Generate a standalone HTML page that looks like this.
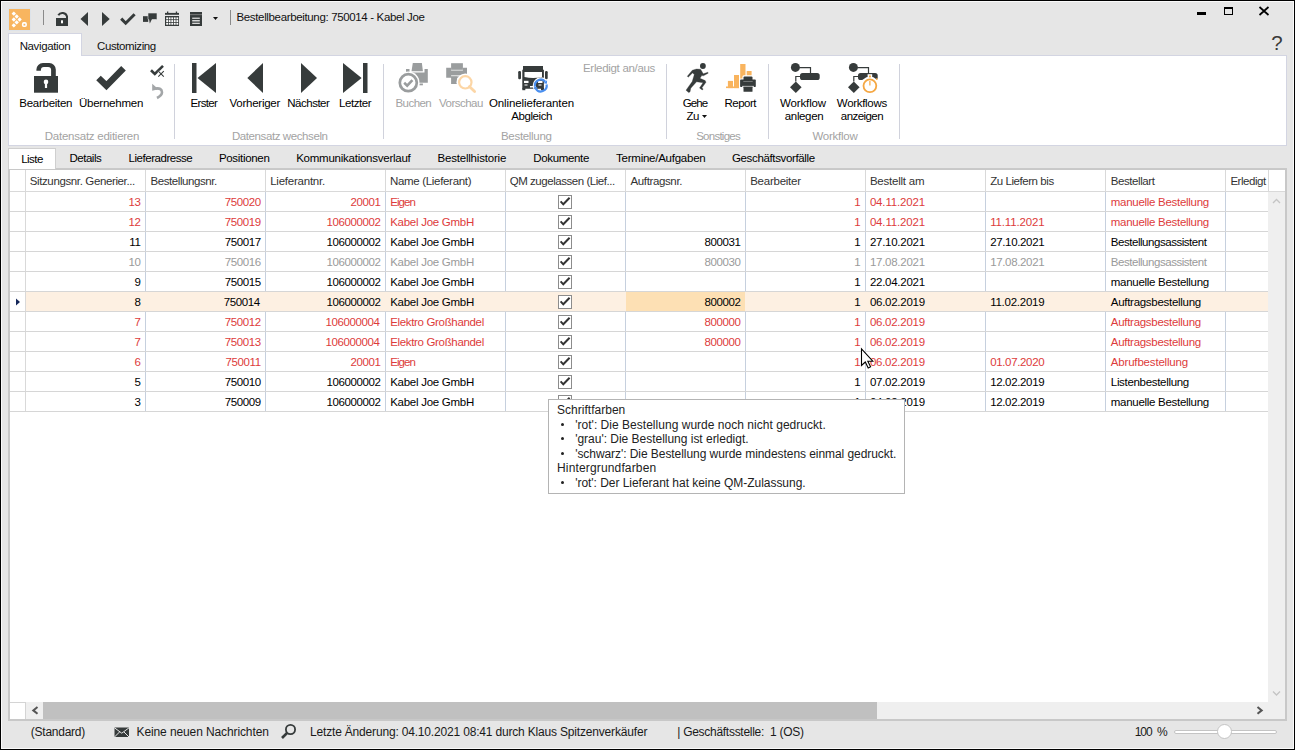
<!DOCTYPE html><html><head><meta charset="utf-8"><style>
html,body{margin:0;padding:0}
body{width:1295px;height:750px;overflow:hidden;position:relative;background:#e6e6e6;font-family:"Liberation Sans", sans-serif}
.t{position:absolute;white-space:nowrap}
.r{position:absolute}
.s{position:absolute;overflow:visible}
</style></head><body>
<div class="r" style="left:0px;top:0px;width:1295px;height:1px;background:#000;"></div>
<div class="r" style="left:0px;top:749px;width:1295px;height:1px;background:#000;"></div>
<div class="r" style="left:0px;top:0px;width:1px;height:750px;background:#000;"></div>
<div class="r" style="left:1294px;top:0px;width:1px;height:750px;background:#000;"></div>
<div class="r" style="left:1px;top:1px;width:1293px;height:1px;background:#fafafa;"></div>
<div class="r" style="left:1px;top:748px;width:1293px;height:1px;background:#fafafa;"></div>
<div class="r" style="left:1px;top:1px;width:1px;height:748px;background:#fafafa;"></div>
<div class="r" style="left:1293px;top:1px;width:1px;height:748px;background:#fafafa;"></div>
<svg class="s" style="left:8px;top:8px" width="23" height="23" viewBox="0 0 23 23"><rect x="0.5" y="0.5" width="22" height="22" fill="none" stroke="#dde3ea" stroke-width="1"/><rect x="1" y="1" width="21" height="21" fill="#f8b55f"/><rect x="4.25" y="4.05" width="3.1" height="3.1" rx="0.4" fill="#fff" transform="rotate(45 5.8 5.6)"/><rect x="7.1499999999999995" y="6.95" width="3.1" height="3.1" rx="0.4" fill="#fff" transform="rotate(45 8.7 8.5)"/><rect x="4.25" y="9.95" width="3.1" height="3.1" rx="0.4" fill="#fff" transform="rotate(45 5.8 11.5)"/><rect x="10.1" y="9.95" width="3.1" height="3.1" rx="0.4" fill="#fff" transform="rotate(45 11.65 11.5)"/><rect x="7.1499999999999995" y="12.85" width="3.1" height="3.1" rx="0.4" fill="#fff" transform="rotate(45 8.7 14.4)"/><rect x="4.25" y="15.849999999999998" width="3.1" height="3.1" rx="0.4" fill="#fff" transform="rotate(45 5.8 17.4)"/><rect x="14.7" y="14.9" width="3.4" height="3.4" rx="1" fill="none" stroke="#fff" stroke-width="1.6"/></svg>
<div class="r" style="left:43px;top:10px;width:1px;height:15px;background:#8a8a8a;"></div>
<svg class="s" style="left:55px;top:10px" width="15" height="18" viewBox="0 0 15 18"><rect x="1" y="8" width="12" height="8" fill="#363b3b"/><path d="M3.3 5.2 A4.7 4.5 0 0 1 12 6.5 V8" fill="none" stroke="#363b3b" stroke-width="2"/><rect x="6" y="10.3" width="2" height="3" fill="#fff"/></svg>
<svg class="s" style="left:80px;top:11px" width="9" height="16" viewBox="0 0 9 16"><path d="M8 1 V15 L0.5 8 Z" fill="#363b3b"/></svg>
<svg class="s" style="left:101px;top:11px" width="10" height="16" viewBox="0 0 10 16"><path d="M1 1 V15 L8.7 8 Z" fill="#363b3b"/></svg>
<svg class="s" style="left:119px;top:11px" width="17" height="14" viewBox="0 0 17 14"><path d="M2.2 7.6 L6.7 12.2 L15.6 3.2" fill="none" stroke="#363b3b" stroke-width="3"/></svg>
<svg class="s" style="left:142px;top:12px" width="17" height="13" viewBox="0 0 17 13"><rect x="1" y="4.2" width="5.2" height="5.7" fill="#363b3b"/><rect x="6" y="1" width="9" height="6.5" rx="0.5" fill="#363b3b" stroke="#e6e6e6" stroke-width="0.6"/><path d="M7 7 L7.8 11.5 L10 7 Z" fill="#363b3b"/></svg>
<svg class="s" style="left:165px;top:11px" width="14" height="16" viewBox="0 0 14 16"><rect x="0" y="1.9" width="14" height="1.9" fill="#363b3b"/><rect x="2" y="0.5" width="1.3" height="2" fill="#363b3b"/><rect x="10.8" y="0.5" width="1.3" height="2" fill="#363b3b"/><rect x="0" y="5" width="14" height="10" fill="#363b3b"/><rect x="1.2" y="6.4" width="1.8" height="1.9" fill="#fff"/><rect x="3.75" y="6.4" width="1.8" height="1.9" fill="#fff"/><rect x="6.3" y="6.4" width="1.8" height="1.9" fill="#fff"/><rect x="8.85" y="6.4" width="1.8" height="1.9" fill="#fff"/><rect x="11.399999999999999" y="6.4" width="1.8" height="1.9" fill="#fff"/><rect x="1.2" y="9.100000000000001" width="1.8" height="1.9" fill="#fff"/><rect x="3.75" y="9.100000000000001" width="1.8" height="1.9" fill="#fff"/><rect x="6.3" y="9.100000000000001" width="1.8" height="1.9" fill="#fff"/><rect x="8.85" y="9.100000000000001" width="1.8" height="1.9" fill="#fff"/><rect x="11.399999999999999" y="9.100000000000001" width="1.8" height="1.9" fill="#fff"/><rect x="1.2" y="11.8" width="1.8" height="1.9" fill="#fff"/><rect x="3.75" y="11.8" width="1.8" height="1.9" fill="#fff"/><rect x="6.3" y="11.8" width="1.8" height="1.9" fill="#fff"/><rect x="8.85" y="11.8" width="1.8" height="1.9" fill="#fff"/><rect x="11.399999999999999" y="11.8" width="1.8" height="1.9" fill="#fff"/></svg>
<svg class="s" style="left:190px;top:12px" width="12" height="15" viewBox="0 0 12 15"><rect x="0" y="0" width="12" height="14" fill="#363b3b"/><rect x="0" y="2.3" width="12" height="0.8" fill="#888"/><rect x="2.2" y="5.6" width="7.6" height="1.3" fill="#d8d8d8"/><rect x="2.2" y="8.2" width="7.6" height="1.2" fill="#fff"/><rect x="2.2" y="10.7" width="7.6" height="1.3" fill="#d8d8d8"/></svg>
<svg class="s" style="left:212px;top:16px" width="7" height="5" viewBox="0 0 7 5"><path d="M1 1 H6 L3.5 4 Z" fill="#111"/></svg>
<div class="r" style="left:230px;top:10px;width:1px;height:15px;background:#8a8a8a;"></div>
<div class="t" style="left:236.50px;top:10px;font-size:11.5px;line-height:14px;color:#111;letter-spacing:-0.351px;">Bestellbearbeitung: 750014 - Kabel Joe</div>
<div class="r" style="left:1197px;top:12px;width:9px;height:3px;background:#000;"></div>
<div class="r" style="left:1224px;top:7px;width:7px;height:5px;border:1.6px solid #000;border-top-width:2px"></div>
<svg class="s" style="left:1258px;top:6px" width="12" height="10" viewBox="0 0 12 10"><path d="M1.5 1 L10.5 9 M10.5 1 L1.5 9" stroke="#000" stroke-width="1.7"/></svg>
<div class="t" style="left:1271.30px;top:34px;font-size:20.5px;line-height:18px;color:#3a3a3a;letter-spacing:0.000px;">?</div>
<div class="r" style="left:8px;top:33px;width:72px;height:24px;background:#fff;border:1px solid #d3d5e2;border-bottom:none"></div>
<div class="r" style="left:8px;top:55px;width:1277px;height:89px;background:#fff;border:1px solid #d3d5e2"></div>
<div class="r" style="left:9px;top:55px;width:72px;height:1px;background:#fff;"></div>
<div class="t" style="left:19.70px;top:39px;font-size:11.5px;line-height:14px;color:#111;letter-spacing:-0.383px;">Navigation</div>
<div class="t" style="left:97.10px;top:39px;font-size:11.5px;line-height:14px;color:#111;letter-spacing:-0.418px;">Customizing</div>
<div class="r" style="left:174px;top:64px;width:1px;height:75px;background:#d0d2dc;"></div>
<div class="r" style="left:383px;top:64px;width:1px;height:75px;background:#d0d2dc;"></div>
<div class="r" style="left:666px;top:64px;width:1px;height:75px;background:#d0d2dc;"></div>
<div class="r" style="left:768px;top:64px;width:1px;height:75px;background:#d0d2dc;"></div>
<div class="r" style="left:899px;top:64px;width:1px;height:75px;background:#d0d2dc;"></div>
<svg class="s" style="left:34px;top:63px" width="24" height="30" viewBox="0 0 24 30"><rect x="0" y="13" width="24" height="16.7" fill="#363b3b"/><path d="M2.4 7.7 V6.5 A6.5 6.5 0 0 1 8.9 0 H15.3 A6.5 6.5 0 0 1 21.8 6.5 V13.1 H17.1 V7 A3 3 0 0 0 14.1 4 H9.9 A3 3 0 0 0 6.9 7 V7.7 Z" fill="#363b3b"/><circle cx="12" cy="18.9" r="2.3" fill="#fff"/><rect x="10.9" y="19" width="2.2" height="6" fill="#fff"/></svg>
<svg class="s" style="left:95px;top:64px" width="32" height="27" viewBox="0 0 32 27"><path d="M3.5 14 L11.4 21.7 L28.5 4.3" fill="none" stroke="#363b3b" stroke-width="6.5"/></svg>
<svg class="s" style="left:148px;top:63px" width="18" height="16" viewBox="0 0 18 16"><path d="M3 7.3 L6.8 11 L15 2.8" fill="none" stroke="#363b3b" stroke-width="2.6"/><path d="M10.3 8.2 L15.8 13.6 M15.8 8.2 L10.3 13.6" stroke="#fff" stroke-width="2.2"/><path d="M10.3 8.2 L15.8 13.6 M15.8 8.2 L10.3 13.6" stroke="#363b3b" stroke-width="1.1"/></svg>
<svg class="s" style="left:150px;top:83px" width="15" height="17" viewBox="0 0 15 17"><path d="M5.5 5.6 Q11.8 4.6 12 9.2 Q12 12.3 7 15" fill="none" stroke="#a3a6a8" stroke-width="2.6"/><path d="M2.2 0.8 V7.8 L8.4 6.2 Z" fill="#a3a6a8"/></svg>
<div class="t" style="left:19.30px;top:96px;font-size:11.5px;line-height:14px;color:#000;letter-spacing:-0.270px;">Bearbeiten</div>
<div class="t" style="left:79.00px;top:96px;font-size:11.5px;line-height:14px;color:#000;letter-spacing:-0.243px;">Übernehmen</div>
<div class="t" style="left:44.80px;top:129px;font-size:11.5px;line-height:14px;color:#a3a3a3;letter-spacing:-0.249px;">Datensatz editieren</div>
<svg class="s" style="left:191px;top:62px" width="27" height="32" viewBox="0 0 27 32"><rect x="1" y="1" width="4.5" height="30" fill="#363b3b"/><path d="M25 1 V31 L6.5 16 Z" fill="#363b3b"/></svg>
<svg class="s" style="left:246px;top:62px" width="18" height="32" viewBox="0 0 18 32"><path d="M17 1 V31 L1.3 16 Z" fill="#363b3b"/></svg>
<svg class="s" style="left:300px;top:62px" width="18" height="32" viewBox="0 0 18 32"><path d="M1 1 V31 L17 16 Z" fill="#363b3b"/></svg>
<svg class="s" style="left:342px;top:62px" width="27" height="32" viewBox="0 0 27 32"><rect x="21" y="1" width="4.5" height="30" fill="#363b3b"/><path d="M1 1 V31 L19.6 16 Z" fill="#363b3b"/></svg>
<div class="t" style="left:190.50px;top:96px;font-size:11.5px;line-height:14px;color:#000;letter-spacing:-0.668px;">Erster</div>
<div class="t" style="left:229.50px;top:96px;font-size:11.5px;line-height:14px;color:#000;letter-spacing:-0.248px;">Vorheriger</div>
<div class="t" style="left:287.30px;top:96px;font-size:11.5px;line-height:14px;color:#000;letter-spacing:-0.498px;">Nächster</div>
<div class="t" style="left:339.00px;top:96px;font-size:11.5px;line-height:14px;color:#000;letter-spacing:-0.421px;">Letzter</div>
<div class="t" style="left:231.90px;top:129px;font-size:11.5px;line-height:14px;color:#a3a3a3;letter-spacing:-0.401px;">Datensatz wechseln</div>
<svg class="s" style="left:396px;top:62px" width="34" height="32" viewBox="0 0 34 32"><path d="M16.8 1 H25.9 L26.9 9.3 H15.5 Z" fill="#9a9d9e"/><path d="M10 7 H13.5 V10.5 H28.5 V7.1 H31.8 V20.7 H10 Z" fill="#9a9d9e"/><rect x="23.4" y="21.5" width="3.5" height="1.8" fill="#9a9d9e"/><circle cx="12.3" cy="20.7" r="11.2" fill="#fff"/><circle cx="12.3" cy="20.7" r="8.5" fill="none" stroke="#9a9d9e" stroke-width="2.7"/><path d="M8.2 20.8 L11.2 23.6 L16.4 18.2" fill="none" stroke="#9a9d9e" stroke-width="2.6"/></svg>
<svg class="s" style="left:445px;top:62px" width="33" height="32" viewBox="0 0 33 32"><rect x="6.1" y="1.2" width="11.8" height="6.6" fill="#9a9d9e"/><path d="M1.2 5.7 H6.1 V8.5 H17.9 V5.7 H22 V15.8 H1.2 Z" fill="#9a9d9e"/><rect x="6.1" y="13.4" width="11.8" height="1" fill="#fff"/><rect x="6.1" y="14.4" width="6.2" height="7.6" fill="#9a9d9e"/><circle cx="20.3" cy="20.3" r="8.8" fill="#fff"/><circle cx="20.3" cy="20.3" r="6.2" fill="none" stroke="#fcd6a6" stroke-width="2.2"/><path d="M24.4 24.6 L29.6 29.6" stroke="#fcd6a6" stroke-width="2.8" stroke-linecap="round"/></svg>
<svg class="s" style="left:518px;top:66px" width="31" height="27" viewBox="0 0 31 27"><rect x="5" y="0" width="20" height="5.3" fill="#363b3b"/><path d="M4.3 3.8 H25.9 V22.8 H4.3 Z M6.5 6 V11 Q15 13 24 11 V6 Z" fill="#363b3b" fill-rule="evenodd"/><rect x="0.2" y="5" width="2.8" height="8.2" rx="1.2" fill="#363b3b"/><rect x="27" y="5" width="2.7" height="8.2" rx="1.2" fill="#363b3b"/><rect x="4.3" y="22" width="3" height="2.2" fill="#363b3b"/><rect x="23" y="22" width="3" height="2.2" fill="#363b3b"/><rect x="6" y="14.8" width="4.5" height="2.2" fill="#fff"/><rect x="20" y="14.8" width="4.5" height="2.2" fill="#fff"/><rect x="6.5" y="18.5" width="3" height="1" fill="#fff"/><rect x="20.5" y="18.5" width="3" height="1" fill="#fff"/><rect x="12" y="20" width="6" height="1.5" fill="#fff"/><circle cx="22.8" cy="19.4" r="7.2" fill="none" stroke="#fff" stroke-width="1.8"/><path d="M16.99 20.52 A5.9 5.9 0 0 1 27.32 15.71" fill="none" stroke="#4a8fef" stroke-width="2.2"/><path d="M28.93 17.63 L29.08 14.23 L25.56 17.19 Z" fill="#4a8fef"/><path d="M28.61 18.48 A5.9 5.9 0 0 1 17.69 22.45" fill="none" stroke="#4a8fef" stroke-width="2.2"/><path d="M16.44 20.28 L15.70 23.60 L19.68 21.30 Z" fill="#4a8fef"/></svg>
<div class="t" style="left:395.50px;top:96px;font-size:11.5px;line-height:14px;color:#a3a3a3;letter-spacing:-0.562px;">Buchen</div>
<div class="t" style="left:439.00px;top:96px;font-size:11.5px;line-height:14px;color:#a3a3a3;letter-spacing:-0.508px;">Vorschau</div>
<div class="t" style="left:489.00px;top:96px;font-size:11.5px;line-height:14px;color:#000;letter-spacing:-0.116px;">Onlinelieferanten</div>
<div class="t" style="left:511.30px;top:109px;font-size:11.5px;line-height:14px;color:#000;letter-spacing:-0.431px;">Abgleich</div>
<div class="t" style="left:501.00px;top:129px;font-size:11.5px;line-height:14px;color:#a3a3a3;letter-spacing:-0.312px;">Bestellung</div>
<div class="t" style="left:583.00px;top:61px;font-size:11.5px;line-height:14px;color:#a3a3a3;letter-spacing:-0.312px;">Erledigt an/aus</div>
<svg class="s" style="left:685px;top:63px" width="25" height="31" viewBox="0 0 25 31"><circle cx="17.9" cy="3.0" r="2.9" fill="#363b3b"/><path d="M2.3 13.2 L7.3 7.2 L11.5 6.0 L15.5 6.2 L16.8 8.2 L18.2 10.8 L22.9 9.2 L23.2 10.2 L18.5 12.8 L16.8 12.6 L15.0 15.3 L20.2 17.6 L21.0 19.2 L17.0 24.8 L18.2 26.2 L17.2 26.9 L14.5 25.0 L18.0 19.8 L11.6 18.8 L5.8 25.2 L5.0 29.0 L3.6 29.6 L1.0 27.2 L7.2 18.5 L9.3 11.5 L7.5 10.0 L3.2 14.2 Z" fill="#363b3b" stroke="#363b3b" stroke-width="0.3" stroke-linejoin="round"/></svg>
<svg class="s" style="left:726px;top:64px" width="30" height="29" viewBox="0 0 30 29"><rect x="1.9" y="16.9" width="5.1" height="7.2" fill="#f9b45e"/><rect x="8" y="11" width="5" height="13.1" fill="#f9b45e"/><rect x="14.2" y="0" width="5.3" height="15" fill="#f9b45e"/><rect x="20.7" y="7" width="4.9" height="6" fill="#f9b45e"/><rect x="0" y="22.5" width="13" height="1.6" fill="#f9b45e"/><rect x="16.4" y="11.3" width="11.2" height="8" rx="1.5" fill="#fff"/><rect x="13.1" y="14.6" width="17.7" height="14.4" rx="1.5" fill="#fff"/><rect x="17.5" y="12.4" width="9" height="5.6" rx="1" fill="#363b3b"/><rect x="14.1" y="15.6" width="15.7" height="7.4" rx="0.8" fill="#363b3b"/><rect x="17.3" y="17.1" width="9.4" height="0.9" fill="#7a7d7d"/><rect x="16" y="21.9" width="12" height="0.8" fill="#fff"/><rect x="17.5" y="22.7" width="9" height="5.1" rx="0.6" fill="#363b3b"/></svg>
<div class="t" style="left:682.80px;top:96px;font-size:11.5px;line-height:14px;color:#000;letter-spacing:-0.912px;">Gehe</div>
<div class="t" style="left:686.50px;top:109px;font-size:11.5px;line-height:14px;color:#000;letter-spacing:-0.400px;">Zu</div>
<svg class="s" style="left:702px;top:115px" width="6" height="4" viewBox="0 0 6 4"><path d="M0 0 H5 L2.5 3 Z" fill="#111"/></svg>
<div class="t" style="left:724.50px;top:96px;font-size:11.5px;line-height:14px;color:#000;letter-spacing:-0.524px;">Report</div>
<div class="t" style="left:696.20px;top:129px;font-size:11.5px;line-height:14px;color:#a3a3a3;letter-spacing:-0.744px;">Sonstiges</div>
<svg class="s" style="left:790px;top:63px" width="31" height="31" viewBox="0 0 31 31"><circle cx="5.4" cy="4.4" r="4.5" fill="#363b3b"/><path d="M9.5 4.65 H20.5 V10" fill="none" stroke="#363b3b" stroke-width="1.2"/><rect x="10" y="10" width="19.7" height="7" rx="2.6" fill="#363b3b"/><path d="M10.2 13.5 H5.8 V18.5" fill="none" stroke="#363b3b" stroke-width="1.2"/><path d="M5.8 18.4 L11.6 24.2 L5.8 30 L0 24.2 Z" fill="#363b3b"/></svg>
<svg class="s" style="left:848px;top:63px" width="32" height="32" viewBox="0 0 32 32"><circle cx="5.4" cy="4.4" r="4.5" fill="#363b3b"/><path d="M9.5 4.65 H20.5 V10" fill="none" stroke="#363b3b" stroke-width="1.2"/><rect x="10" y="10" width="19.7" height="7" rx="2.6" fill="#363b3b"/><path d="M10.2 13.5 H5.8 V18.5" fill="none" stroke="#363b3b" stroke-width="1.2"/><path d="M5.8 18.4 L11.6 24.2 L5.8 30 L0 24.2 Z" fill="#363b3b"/><circle cx="21.9" cy="22.8" r="9.2" fill="#fff"/><rect x="20.6" y="12.2" width="2.6" height="2.4" fill="#fff" stroke="#fff" stroke-width="2"/><circle cx="21.9" cy="22.8" r="6.4" fill="none" stroke="#f5a742" stroke-width="1.8"/><rect x="21" y="12.5" width="1.9" height="1.9" fill="#f5a742"/><rect x="21.3" y="18" width="1.2" height="4.5" fill="#f5a742"/><rect x="28" y="15.3" width="1.5" height="1.5" fill="#f5a742"/></svg>
<div class="t" style="left:780.00px;top:96px;font-size:11.5px;line-height:14px;color:#000;letter-spacing:-0.138px;">Workflow</div>
<div class="t" style="left:784.80px;top:109px;font-size:11.5px;line-height:14px;color:#000;letter-spacing:-0.356px;">anlegen</div>
<div class="t" style="left:836.80px;top:96px;font-size:11.5px;line-height:14px;color:#000;letter-spacing:-0.309px;">Workflows</div>
<div class="t" style="left:840.80px;top:109px;font-size:11.5px;line-height:14px;color:#000;letter-spacing:-0.555px;">anzeigen</div>
<div class="t" style="left:812.40px;top:129px;font-size:11.5px;line-height:14px;color:#a3a3a3;letter-spacing:-0.253px;">Workflow</div>
<div class="r" style="left:8px;top:168px;width:1279px;height:1px;background:#c9c9c9;"></div>
<div class="r" style="left:8px;top:148px;width:46px;height:21px;background:#fff;border:1px solid #cfcfcf;border-bottom:none"></div>
<div class="t" style="left:21.30px;top:152px;font-size:11.5px;line-height:14px;color:#000;letter-spacing:-0.574px;">Liste</div>
<div class="t" style="left:69.50px;top:151px;font-size:11.5px;line-height:14px;color:#000;letter-spacing:-0.484px;">Details</div>
<div class="t" style="left:128.60px;top:151px;font-size:11.5px;line-height:14px;color:#000;letter-spacing:-0.465px;">Lieferadresse</div>
<div class="t" style="left:218.90px;top:151px;font-size:11.5px;line-height:14px;color:#000;letter-spacing:-0.312px;">Positionen</div>
<div class="t" style="left:296.20px;top:151px;font-size:11.5px;line-height:14px;color:#000;letter-spacing:-0.247px;">Kommunikationsverlauf</div>
<div class="t" style="left:437.50px;top:151px;font-size:11.5px;line-height:14px;color:#000;letter-spacing:-0.199px;">Bestellhistorie</div>
<div class="t" style="left:533.20px;top:151px;font-size:11.5px;line-height:14px;color:#000;letter-spacing:-0.327px;">Dokumente</div>
<div class="t" style="left:616.10px;top:151px;font-size:11.5px;line-height:14px;color:#000;letter-spacing:-0.249px;">Termine/Aufgaben</div>
<div class="t" style="left:732.00px;top:151px;font-size:11.5px;line-height:14px;color:#000;letter-spacing:-0.359px;">Geschäftsvorfälle</div>

<div class="r" style="left:8px;top:169px;width:1279px;height:552px;background:#c8c8c8;"></div>
<div class="r" style="left:10px;top:170px;width:1275px;height:549px;background:#fff;"></div>
<div class="r" style="left:1268px;top:192px;width:17px;height:527px;background:#efefef;"></div>
<div class="r" style="left:10px;top:191px;width:1258px;height:1px;background:#d9d9d9;"></div>
<div class="r" style="left:25px;top:170px;width:1px;height:21px;background:#d9d9d9;"></div>
<div class="r" style="left:145px;top:170px;width:1px;height:21px;background:#d9d9d9;"></div>
<div class="r" style="left:265px;top:170px;width:1px;height:21px;background:#d9d9d9;"></div>
<div class="r" style="left:385px;top:170px;width:1px;height:21px;background:#d9d9d9;"></div>
<div class="r" style="left:505px;top:170px;width:1px;height:21px;background:#d9d9d9;"></div>
<div class="r" style="left:625px;top:170px;width:1px;height:21px;background:#d9d9d9;"></div>
<div class="r" style="left:745px;top:170px;width:1px;height:21px;background:#d9d9d9;"></div>
<div class="r" style="left:865px;top:170px;width:1px;height:21px;background:#d9d9d9;"></div>
<div class="r" style="left:985px;top:170px;width:1px;height:21px;background:#d9d9d9;"></div>
<div class="r" style="left:1105px;top:170px;width:1px;height:21px;background:#d9d9d9;"></div>
<div class="r" style="left:1225px;top:170px;width:1px;height:21px;background:#d9d9d9;"></div>
<div class="r" style="left:1268px;top:170px;width:1px;height:22px;background:#d9d9d9;"></div>
<div class="r" style="left:1268px;top:191px;width:17px;height:1px;background:#d9d9d9;"></div>
<div class="t" style="left:29.70px;top:174px;font-size:11.5px;line-height:14px;color:#333;letter-spacing:-0.372px;">Sitzungsnr. Generier...</div>
<div class="t" style="left:150.60px;top:174px;font-size:11.5px;line-height:14px;color:#333;letter-spacing:-0.442px;">Bestellungsnr.</div>
<div class="t" style="left:270.20px;top:174px;font-size:11.5px;line-height:14px;color:#333;letter-spacing:-0.231px;">Lieferantnr.</div>
<div class="t" style="left:389.90px;top:174px;font-size:11.5px;line-height:14px;color:#333;letter-spacing:-0.310px;">Name (Lieferant)</div>
<div class="t" style="left:509.70px;top:174px;font-size:11.5px;line-height:14px;color:#333;letter-spacing:-0.455px;">QM zugelassen (Lief...</div>
<div class="t" style="left:630.50px;top:174px;font-size:11.5px;line-height:14px;color:#333;letter-spacing:-0.372px;">Auftragsnr.</div>
<div class="t" style="left:750.20px;top:174px;font-size:11.5px;line-height:14px;color:#333;letter-spacing:-0.248px;">Bearbeiter</div>
<div class="t" style="left:869.90px;top:174px;font-size:11.5px;line-height:14px;color:#333;letter-spacing:-0.220px;">Bestellt am</div>
<div class="t" style="left:990.20px;top:174px;font-size:11.5px;line-height:14px;color:#333;letter-spacing:-0.440px;">Zu Liefern bis</div>
<div class="t" style="left:1110.80px;top:174px;font-size:11.5px;line-height:14px;color:#333;letter-spacing:-0.427px;">Bestellart</div>
<div class="t" style="left:1230.40px;top:174px;font-size:11.5px;line-height:14px;color:#333;letter-spacing:-0.457px;">Erledigt</div>
<div class="r" style="left:10px;top:211px;width:1258px;height:1px;background:#d6d6d6;"></div>
<div class="r" style="left:25px;top:192px;width:1px;height:19px;background:#d9d9d9;"></div>
<div class="r" style="left:145px;top:192px;width:1px;height:19px;background:#c6d0de;"></div>
<div class="r" style="left:265px;top:192px;width:1px;height:19px;background:#c6d0de;"></div>
<div class="r" style="left:385px;top:192px;width:1px;height:19px;background:#c6d0de;"></div>
<div class="r" style="left:505px;top:192px;width:1px;height:19px;background:#c6d0de;"></div>
<div class="r" style="left:625px;top:192px;width:1px;height:19px;background:#c6d0de;"></div>
<div class="r" style="left:745px;top:192px;width:1px;height:19px;background:#c6d0de;"></div>
<div class="r" style="left:865px;top:192px;width:1px;height:19px;background:#c6d0de;"></div>
<div class="r" style="left:985px;top:192px;width:1px;height:19px;background:#c6d0de;"></div>
<div class="r" style="left:1105px;top:192px;width:1px;height:19px;background:#c6d0de;"></div>
<div class="r" style="left:1225px;top:192px;width:1px;height:19px;background:#c6d0de;"></div>
<div class="t" style="left:128.49px;top:195px;font-size:11.5px;line-height:14px;color:#dd3b3b;letter-spacing:-0.390px;">13</div>
<div class="t" style="left:224.67px;top:195px;font-size:11.5px;line-height:14px;color:#dd3b3b;letter-spacing:-0.390px;">750020</div>
<div class="t" style="left:350.48px;top:195px;font-size:11.5px;line-height:14px;color:#dd3b3b;letter-spacing:-0.390px;">20001</div>
<div class="t" style="left:390.20px;top:195px;font-size:11.5px;line-height:14px;color:#dd3b3b;letter-spacing:-0.954px;">Eigen</div>
<div class="r" style="left:558px;top:195px;width:12px;height:12px;border:1px solid #8c8c8c;background:#fff"></div>
<svg class="s" style="left:558px;top:195px" width="14" height="14" viewBox="0 0 14 14"><path d="M2.6 6.3 L5.3 9.3 L11.6 2.8" fill="none" stroke="#333" stroke-width="2"/></svg>
<div class="t" style="left:854.30px;top:195px;font-size:11.5px;line-height:14px;color:#dd3b3b;letter-spacing:0.000px;">1</div>
<div class="t" style="left:869.90px;top:195px;font-size:11.5px;line-height:14px;color:#dd3b3b;letter-spacing:-0.167px;">04.11.2021</div>
<div class="t" style="left:1110.80px;top:195px;font-size:11.5px;line-height:14px;color:#dd3b3b;letter-spacing:-0.287px;">manuelle Bestellung</div>
<div class="r" style="left:10px;top:231px;width:1258px;height:1px;background:#d6d6d6;"></div>
<div class="r" style="left:25px;top:212px;width:1px;height:19px;background:#d9d9d9;"></div>
<div class="r" style="left:145px;top:212px;width:1px;height:19px;background:#c6d0de;"></div>
<div class="r" style="left:265px;top:212px;width:1px;height:19px;background:#c6d0de;"></div>
<div class="r" style="left:385px;top:212px;width:1px;height:19px;background:#c6d0de;"></div>
<div class="r" style="left:505px;top:212px;width:1px;height:19px;background:#c6d0de;"></div>
<div class="r" style="left:625px;top:212px;width:1px;height:19px;background:#c6d0de;"></div>
<div class="r" style="left:745px;top:212px;width:1px;height:19px;background:#c6d0de;"></div>
<div class="r" style="left:865px;top:212px;width:1px;height:19px;background:#c6d0de;"></div>
<div class="r" style="left:985px;top:212px;width:1px;height:19px;background:#c6d0de;"></div>
<div class="r" style="left:1105px;top:212px;width:1px;height:19px;background:#c6d0de;"></div>
<div class="r" style="left:1225px;top:212px;width:1px;height:19px;background:#c6d0de;"></div>
<div class="t" style="left:128.49px;top:215px;font-size:11.5px;line-height:14px;color:#dd3b3b;letter-spacing:-0.390px;">12</div>
<div class="t" style="left:224.67px;top:215px;font-size:11.5px;line-height:14px;color:#dd3b3b;letter-spacing:-0.390px;">750019</div>
<div class="t" style="left:326.45px;top:215px;font-size:11.5px;line-height:14px;color:#dd3b3b;letter-spacing:-0.390px;">106000002</div>
<div class="t" style="left:390.20px;top:215px;font-size:11.5px;line-height:14px;color:#dd3b3b;letter-spacing:-0.267px;">Kabel Joe GmbH</div>
<div class="r" style="left:558px;top:215px;width:12px;height:12px;border:1px solid #8c8c8c;background:#fff"></div>
<svg class="s" style="left:558px;top:215px" width="14" height="14" viewBox="0 0 14 14"><path d="M2.6 6.3 L5.3 9.3 L11.6 2.8" fill="none" stroke="#333" stroke-width="2"/></svg>
<div class="t" style="left:854.30px;top:215px;font-size:11.5px;line-height:14px;color:#dd3b3b;letter-spacing:0.000px;">1</div>
<div class="t" style="left:869.90px;top:215px;font-size:11.5px;line-height:14px;color:#dd3b3b;letter-spacing:-0.167px;">04.11.2021</div>
<div class="t" style="left:990.20px;top:215px;font-size:11.5px;line-height:14px;color:#dd3b3b;letter-spacing:-0.161px;">11.11.2021</div>
<div class="t" style="left:1110.80px;top:215px;font-size:11.5px;line-height:14px;color:#dd3b3b;letter-spacing:-0.287px;">manuelle Bestellung</div>
<div class="r" style="left:10px;top:251px;width:1258px;height:1px;background:#d6d6d6;"></div>
<div class="r" style="left:25px;top:232px;width:1px;height:19px;background:#d9d9d9;"></div>
<div class="r" style="left:145px;top:232px;width:1px;height:19px;background:#c6d0de;"></div>
<div class="r" style="left:265px;top:232px;width:1px;height:19px;background:#c6d0de;"></div>
<div class="r" style="left:385px;top:232px;width:1px;height:19px;background:#c6d0de;"></div>
<div class="r" style="left:505px;top:232px;width:1px;height:19px;background:#c6d0de;"></div>
<div class="r" style="left:625px;top:232px;width:1px;height:19px;background:#c6d0de;"></div>
<div class="r" style="left:745px;top:232px;width:1px;height:19px;background:#c6d0de;"></div>
<div class="r" style="left:865px;top:232px;width:1px;height:19px;background:#c6d0de;"></div>
<div class="r" style="left:985px;top:232px;width:1px;height:19px;background:#c6d0de;"></div>
<div class="r" style="left:1105px;top:232px;width:1px;height:19px;background:#c6d0de;"></div>
<div class="r" style="left:1225px;top:232px;width:1px;height:19px;background:#c6d0de;"></div>
<div class="t" style="left:129.35px;top:235px;font-size:11.5px;line-height:14px;color:#000;letter-spacing:-0.390px;">11</div>
<div class="t" style="left:224.67px;top:235px;font-size:11.5px;line-height:14px;color:#000;letter-spacing:-0.390px;">750017</div>
<div class="t" style="left:326.45px;top:235px;font-size:11.5px;line-height:14px;color:#000;letter-spacing:-0.390px;">106000002</div>
<div class="t" style="left:390.20px;top:235px;font-size:11.5px;line-height:14px;color:#000;letter-spacing:-0.267px;">Kabel Joe GmbH</div>
<div class="r" style="left:558px;top:235px;width:12px;height:12px;border:1px solid #8c8c8c;background:#fff"></div>
<svg class="s" style="left:558px;top:235px" width="14" height="14" viewBox="0 0 14 14"><path d="M2.6 6.3 L5.3 9.3 L11.6 2.8" fill="none" stroke="#333" stroke-width="2"/></svg>
<div class="t" style="left:704.47px;top:235px;font-size:11.5px;line-height:14px;color:#000;letter-spacing:-0.390px;">800031</div>
<div class="t" style="left:854.30px;top:235px;font-size:11.5px;line-height:14px;color:#000;letter-spacing:0.000px;">1</div>
<div class="t" style="left:869.90px;top:235px;font-size:11.5px;line-height:14px;color:#000;letter-spacing:-0.262px;">27.10.2021</div>
<div class="t" style="left:990.20px;top:235px;font-size:11.5px;line-height:14px;color:#000;letter-spacing:-0.351px;">27.10.2021</div>
<div class="t" style="left:1110.80px;top:235px;font-size:11.5px;line-height:14px;color:#000;letter-spacing:-0.460px;">Bestellungsassistent</div>
<div class="r" style="left:10px;top:271px;width:1258px;height:1px;background:#d6d6d6;"></div>
<div class="r" style="left:25px;top:252px;width:1px;height:19px;background:#d9d9d9;"></div>
<div class="r" style="left:145px;top:252px;width:1px;height:19px;background:#c6d0de;"></div>
<div class="r" style="left:265px;top:252px;width:1px;height:19px;background:#c6d0de;"></div>
<div class="r" style="left:385px;top:252px;width:1px;height:19px;background:#c6d0de;"></div>
<div class="r" style="left:505px;top:252px;width:1px;height:19px;background:#c6d0de;"></div>
<div class="r" style="left:625px;top:252px;width:1px;height:19px;background:#c6d0de;"></div>
<div class="r" style="left:745px;top:252px;width:1px;height:19px;background:#c6d0de;"></div>
<div class="r" style="left:865px;top:252px;width:1px;height:19px;background:#c6d0de;"></div>
<div class="r" style="left:985px;top:252px;width:1px;height:19px;background:#c6d0de;"></div>
<div class="r" style="left:1105px;top:252px;width:1px;height:19px;background:#c6d0de;"></div>
<div class="r" style="left:1225px;top:252px;width:1px;height:19px;background:#c6d0de;"></div>
<div class="t" style="left:128.49px;top:255px;font-size:11.5px;line-height:14px;color:#9a9a9a;letter-spacing:-0.390px;">10</div>
<div class="t" style="left:224.67px;top:255px;font-size:11.5px;line-height:14px;color:#9a9a9a;letter-spacing:-0.390px;">750016</div>
<div class="t" style="left:326.45px;top:255px;font-size:11.5px;line-height:14px;color:#9a9a9a;letter-spacing:-0.390px;">106000002</div>
<div class="t" style="left:390.20px;top:255px;font-size:11.5px;line-height:14px;color:#9a9a9a;letter-spacing:-0.267px;">Kabel Joe GmbH</div>
<div class="r" style="left:558px;top:255px;width:12px;height:12px;border:1px solid #8c8c8c;background:#fff"></div>
<svg class="s" style="left:558px;top:255px" width="14" height="14" viewBox="0 0 14 14"><path d="M2.6 6.3 L5.3 9.3 L11.6 2.8" fill="none" stroke="#333" stroke-width="2"/></svg>
<div class="t" style="left:704.47px;top:255px;font-size:11.5px;line-height:14px;color:#9a9a9a;letter-spacing:-0.390px;">800030</div>
<div class="t" style="left:854.30px;top:255px;font-size:11.5px;line-height:14px;color:#9a9a9a;letter-spacing:0.000px;">1</div>
<div class="t" style="left:869.90px;top:255px;font-size:11.5px;line-height:14px;color:#9a9a9a;letter-spacing:-0.262px;">17.08.2021</div>
<div class="t" style="left:990.20px;top:255px;font-size:11.5px;line-height:14px;color:#9a9a9a;letter-spacing:-0.351px;">17.08.2021</div>
<div class="t" style="left:1110.80px;top:255px;font-size:11.5px;line-height:14px;color:#9a9a9a;letter-spacing:-0.460px;">Bestellungsassistent</div>
<div class="r" style="left:10px;top:291px;width:1258px;height:1px;background:#d6d6d6;"></div>
<div class="r" style="left:25px;top:272px;width:1px;height:19px;background:#d9d9d9;"></div>
<div class="r" style="left:145px;top:272px;width:1px;height:19px;background:#c6d0de;"></div>
<div class="r" style="left:265px;top:272px;width:1px;height:19px;background:#c6d0de;"></div>
<div class="r" style="left:385px;top:272px;width:1px;height:19px;background:#c6d0de;"></div>
<div class="r" style="left:505px;top:272px;width:1px;height:19px;background:#c6d0de;"></div>
<div class="r" style="left:625px;top:272px;width:1px;height:19px;background:#c6d0de;"></div>
<div class="r" style="left:745px;top:272px;width:1px;height:19px;background:#c6d0de;"></div>
<div class="r" style="left:865px;top:272px;width:1px;height:19px;background:#c6d0de;"></div>
<div class="r" style="left:985px;top:272px;width:1px;height:19px;background:#c6d0de;"></div>
<div class="r" style="left:1105px;top:272px;width:1px;height:19px;background:#c6d0de;"></div>
<div class="r" style="left:1225px;top:272px;width:1px;height:19px;background:#c6d0de;"></div>
<div class="t" style="left:134.50px;top:275px;font-size:11.5px;line-height:14px;color:#000;letter-spacing:-0.390px;">9</div>
<div class="t" style="left:224.67px;top:275px;font-size:11.5px;line-height:14px;color:#000;letter-spacing:-0.390px;">750015</div>
<div class="t" style="left:326.45px;top:275px;font-size:11.5px;line-height:14px;color:#000;letter-spacing:-0.390px;">106000002</div>
<div class="t" style="left:390.20px;top:275px;font-size:11.5px;line-height:14px;color:#000;letter-spacing:-0.267px;">Kabel Joe GmbH</div>
<div class="r" style="left:558px;top:275px;width:12px;height:12px;border:1px solid #8c8c8c;background:#fff"></div>
<svg class="s" style="left:558px;top:275px" width="14" height="14" viewBox="0 0 14 14"><path d="M2.6 6.3 L5.3 9.3 L11.6 2.8" fill="none" stroke="#333" stroke-width="2"/></svg>
<div class="t" style="left:854.30px;top:275px;font-size:11.5px;line-height:14px;color:#000;letter-spacing:0.000px;">1</div>
<div class="t" style="left:869.90px;top:275px;font-size:11.5px;line-height:14px;color:#000;letter-spacing:-0.262px;">22.04.2021</div>
<div class="t" style="left:1110.80px;top:275px;font-size:11.5px;line-height:14px;color:#000;letter-spacing:-0.287px;">manuelle Bestellung</div>
<div class="r" style="left:26px;top:292px;width:1242px;height:19px;background:#fdf0e2;"></div>
<div class="r" style="left:626px;top:292px;width:119px;height:20px;background:#fde0b4;"></div>
<div class="r" style="left:10px;top:311px;width:1258px;height:1px;background:#d6d6d6;"></div>
<div class="r" style="left:25px;top:292px;width:1px;height:19px;background:#d9d9d9;"></div>
<div class="t" style="left:134.50px;top:295px;font-size:11.5px;line-height:14px;color:#000;letter-spacing:-0.390px;">8</div>
<div class="t" style="left:223.67px;top:295px;font-size:11.5px;line-height:14px;color:#000;letter-spacing:-0.390px;">750014</div>
<div class="t" style="left:326.45px;top:295px;font-size:11.5px;line-height:14px;color:#000;letter-spacing:-0.390px;">106000002</div>
<div class="t" style="left:390.20px;top:295px;font-size:11.5px;line-height:14px;color:#000;letter-spacing:-0.267px;">Kabel Joe GmbH</div>
<div class="r" style="left:558px;top:295px;width:12px;height:12px;border:1px solid #8c8c8c;background:#fff"></div>
<svg class="s" style="left:558px;top:295px" width="14" height="14" viewBox="0 0 14 14"><path d="M2.6 6.3 L5.3 9.3 L11.6 2.8" fill="none" stroke="#333" stroke-width="2"/></svg>
<div class="t" style="left:704.47px;top:295px;font-size:11.5px;line-height:14px;color:#000;letter-spacing:-0.390px;">800002</div>
<div class="t" style="left:854.30px;top:295px;font-size:11.5px;line-height:14px;color:#000;letter-spacing:0.000px;">1</div>
<div class="t" style="left:869.90px;top:295px;font-size:11.5px;line-height:14px;color:#000;letter-spacing:-0.262px;">06.02.2019</div>
<div class="t" style="left:990.20px;top:295px;font-size:11.5px;line-height:14px;color:#000;letter-spacing:-0.256px;">11.02.2019</div>
<div class="t" style="left:1110.80px;top:295px;font-size:11.5px;line-height:14px;color:#000;letter-spacing:-0.286px;">Auftragsbestellung</div>
<div class="r" style="left:10px;top:331px;width:1258px;height:1px;background:#d6d6d6;"></div>
<div class="r" style="left:25px;top:312px;width:1px;height:19px;background:#d9d9d9;"></div>
<div class="r" style="left:145px;top:312px;width:1px;height:19px;background:#c6d0de;"></div>
<div class="r" style="left:265px;top:312px;width:1px;height:19px;background:#c6d0de;"></div>
<div class="r" style="left:385px;top:312px;width:1px;height:19px;background:#c6d0de;"></div>
<div class="r" style="left:505px;top:312px;width:1px;height:19px;background:#c6d0de;"></div>
<div class="r" style="left:625px;top:312px;width:1px;height:19px;background:#c6d0de;"></div>
<div class="r" style="left:745px;top:312px;width:1px;height:19px;background:#c6d0de;"></div>
<div class="r" style="left:865px;top:312px;width:1px;height:19px;background:#c6d0de;"></div>
<div class="r" style="left:985px;top:312px;width:1px;height:19px;background:#c6d0de;"></div>
<div class="r" style="left:1105px;top:312px;width:1px;height:19px;background:#c6d0de;"></div>
<div class="r" style="left:1225px;top:312px;width:1px;height:19px;background:#c6d0de;"></div>
<div class="t" style="left:134.50px;top:315px;font-size:11.5px;line-height:14px;color:#dd3b3b;letter-spacing:-0.390px;">7</div>
<div class="t" style="left:224.67px;top:315px;font-size:11.5px;line-height:14px;color:#dd3b3b;letter-spacing:-0.390px;">750012</div>
<div class="t" style="left:325.45px;top:315px;font-size:11.5px;line-height:14px;color:#dd3b3b;letter-spacing:-0.390px;">106000004</div>
<div class="t" style="left:390.20px;top:315px;font-size:11.5px;line-height:14px;color:#dd3b3b;letter-spacing:-0.333px;">Elektro Großhandel</div>
<div class="r" style="left:558px;top:315px;width:12px;height:12px;border:1px solid #8c8c8c;background:#fff"></div>
<svg class="s" style="left:558px;top:315px" width="14" height="14" viewBox="0 0 14 14"><path d="M2.6 6.3 L5.3 9.3 L11.6 2.8" fill="none" stroke="#333" stroke-width="2"/></svg>
<div class="t" style="left:704.47px;top:315px;font-size:11.5px;line-height:14px;color:#dd3b3b;letter-spacing:-0.390px;">800000</div>
<div class="t" style="left:854.30px;top:315px;font-size:11.5px;line-height:14px;color:#dd3b3b;letter-spacing:0.000px;">1</div>
<div class="t" style="left:869.90px;top:315px;font-size:11.5px;line-height:14px;color:#dd3b3b;letter-spacing:-0.262px;">06.02.2019</div>
<div class="t" style="left:1110.80px;top:315px;font-size:11.5px;line-height:14px;color:#dd3b3b;letter-spacing:-0.286px;">Auftragsbestellung</div>
<div class="r" style="left:10px;top:351px;width:1258px;height:1px;background:#d6d6d6;"></div>
<div class="r" style="left:25px;top:332px;width:1px;height:19px;background:#d9d9d9;"></div>
<div class="r" style="left:145px;top:332px;width:1px;height:19px;background:#c6d0de;"></div>
<div class="r" style="left:265px;top:332px;width:1px;height:19px;background:#c6d0de;"></div>
<div class="r" style="left:385px;top:332px;width:1px;height:19px;background:#c6d0de;"></div>
<div class="r" style="left:505px;top:332px;width:1px;height:19px;background:#c6d0de;"></div>
<div class="r" style="left:625px;top:332px;width:1px;height:19px;background:#c6d0de;"></div>
<div class="r" style="left:745px;top:332px;width:1px;height:19px;background:#c6d0de;"></div>
<div class="r" style="left:865px;top:332px;width:1px;height:19px;background:#c6d0de;"></div>
<div class="r" style="left:985px;top:332px;width:1px;height:19px;background:#c6d0de;"></div>
<div class="r" style="left:1105px;top:332px;width:1px;height:19px;background:#c6d0de;"></div>
<div class="r" style="left:1225px;top:332px;width:1px;height:19px;background:#c6d0de;"></div>
<div class="t" style="left:134.50px;top:335px;font-size:11.5px;line-height:14px;color:#dd3b3b;letter-spacing:-0.390px;">7</div>
<div class="t" style="left:224.67px;top:335px;font-size:11.5px;line-height:14px;color:#dd3b3b;letter-spacing:-0.390px;">750013</div>
<div class="t" style="left:325.45px;top:335px;font-size:11.5px;line-height:14px;color:#dd3b3b;letter-spacing:-0.390px;">106000004</div>
<div class="t" style="left:390.20px;top:335px;font-size:11.5px;line-height:14px;color:#dd3b3b;letter-spacing:-0.333px;">Elektro Großhandel</div>
<div class="r" style="left:558px;top:335px;width:12px;height:12px;border:1px solid #8c8c8c;background:#fff"></div>
<svg class="s" style="left:558px;top:335px" width="14" height="14" viewBox="0 0 14 14"><path d="M2.6 6.3 L5.3 9.3 L11.6 2.8" fill="none" stroke="#333" stroke-width="2"/></svg>
<div class="t" style="left:704.47px;top:335px;font-size:11.5px;line-height:14px;color:#dd3b3b;letter-spacing:-0.390px;">800000</div>
<div class="t" style="left:854.30px;top:335px;font-size:11.5px;line-height:14px;color:#dd3b3b;letter-spacing:0.000px;">1</div>
<div class="t" style="left:869.90px;top:335px;font-size:11.5px;line-height:14px;color:#dd3b3b;letter-spacing:-0.262px;">06.02.2019</div>
<div class="t" style="left:1110.80px;top:335px;font-size:11.5px;line-height:14px;color:#dd3b3b;letter-spacing:-0.286px;">Auftragsbestellung</div>
<div class="r" style="left:10px;top:371px;width:1258px;height:1px;background:#d6d6d6;"></div>
<div class="r" style="left:25px;top:352px;width:1px;height:19px;background:#d9d9d9;"></div>
<div class="r" style="left:145px;top:352px;width:1px;height:19px;background:#c6d0de;"></div>
<div class="r" style="left:265px;top:352px;width:1px;height:19px;background:#c6d0de;"></div>
<div class="r" style="left:385px;top:352px;width:1px;height:19px;background:#c6d0de;"></div>
<div class="r" style="left:505px;top:352px;width:1px;height:19px;background:#c6d0de;"></div>
<div class="r" style="left:625px;top:352px;width:1px;height:19px;background:#c6d0de;"></div>
<div class="r" style="left:745px;top:352px;width:1px;height:19px;background:#c6d0de;"></div>
<div class="r" style="left:865px;top:352px;width:1px;height:19px;background:#c6d0de;"></div>
<div class="r" style="left:985px;top:352px;width:1px;height:19px;background:#c6d0de;"></div>
<div class="r" style="left:1105px;top:352px;width:1px;height:19px;background:#c6d0de;"></div>
<div class="r" style="left:1225px;top:352px;width:1px;height:19px;background:#c6d0de;"></div>
<div class="t" style="left:134.50px;top:355px;font-size:11.5px;line-height:14px;color:#dd3b3b;letter-spacing:-0.390px;">6</div>
<div class="t" style="left:225.52px;top:355px;font-size:11.5px;line-height:14px;color:#dd3b3b;letter-spacing:-0.390px;">750011</div>
<div class="t" style="left:350.48px;top:355px;font-size:11.5px;line-height:14px;color:#dd3b3b;letter-spacing:-0.390px;">20001</div>
<div class="t" style="left:390.20px;top:355px;font-size:11.5px;line-height:14px;color:#dd3b3b;letter-spacing:-0.954px;">Eigen</div>
<div class="r" style="left:558px;top:355px;width:12px;height:12px;border:1px solid #8c8c8c;background:#fff"></div>
<svg class="s" style="left:558px;top:355px" width="14" height="14" viewBox="0 0 14 14"><path d="M2.6 6.3 L5.3 9.3 L11.6 2.8" fill="none" stroke="#333" stroke-width="2"/></svg>
<div class="t" style="left:854.30px;top:355px;font-size:11.5px;line-height:14px;color:#dd3b3b;letter-spacing:0.000px;">1</div>
<div class="t" style="left:869.90px;top:355px;font-size:11.5px;line-height:14px;color:#dd3b3b;letter-spacing:-0.262px;">06.02.2019</div>
<div class="t" style="left:990.20px;top:355px;font-size:11.5px;line-height:14px;color:#dd3b3b;letter-spacing:-0.351px;">01.07.2020</div>
<div class="t" style="left:1110.80px;top:355px;font-size:11.5px;line-height:14px;color:#dd3b3b;letter-spacing:-0.180px;">Abrufbestellung</div>
<div class="r" style="left:10px;top:391px;width:1258px;height:1px;background:#d6d6d6;"></div>
<div class="r" style="left:25px;top:372px;width:1px;height:19px;background:#d9d9d9;"></div>
<div class="r" style="left:145px;top:372px;width:1px;height:19px;background:#c6d0de;"></div>
<div class="r" style="left:265px;top:372px;width:1px;height:19px;background:#c6d0de;"></div>
<div class="r" style="left:385px;top:372px;width:1px;height:19px;background:#c6d0de;"></div>
<div class="r" style="left:505px;top:372px;width:1px;height:19px;background:#c6d0de;"></div>
<div class="r" style="left:625px;top:372px;width:1px;height:19px;background:#c6d0de;"></div>
<div class="r" style="left:745px;top:372px;width:1px;height:19px;background:#c6d0de;"></div>
<div class="r" style="left:865px;top:372px;width:1px;height:19px;background:#c6d0de;"></div>
<div class="r" style="left:985px;top:372px;width:1px;height:19px;background:#c6d0de;"></div>
<div class="r" style="left:1105px;top:372px;width:1px;height:19px;background:#c6d0de;"></div>
<div class="r" style="left:1225px;top:372px;width:1px;height:19px;background:#c6d0de;"></div>
<div class="t" style="left:134.50px;top:375px;font-size:11.5px;line-height:14px;color:#000;letter-spacing:-0.390px;">5</div>
<div class="t" style="left:224.67px;top:375px;font-size:11.5px;line-height:14px;color:#000;letter-spacing:-0.390px;">750010</div>
<div class="t" style="left:326.45px;top:375px;font-size:11.5px;line-height:14px;color:#000;letter-spacing:-0.390px;">106000002</div>
<div class="t" style="left:390.20px;top:375px;font-size:11.5px;line-height:14px;color:#000;letter-spacing:-0.267px;">Kabel Joe GmbH</div>
<div class="r" style="left:558px;top:375px;width:12px;height:12px;border:1px solid #8c8c8c;background:#fff"></div>
<svg class="s" style="left:558px;top:375px" width="14" height="14" viewBox="0 0 14 14"><path d="M2.6 6.3 L5.3 9.3 L11.6 2.8" fill="none" stroke="#333" stroke-width="2"/></svg>
<div class="t" style="left:854.30px;top:375px;font-size:11.5px;line-height:14px;color:#000;letter-spacing:0.000px;">1</div>
<div class="t" style="left:869.90px;top:375px;font-size:11.5px;line-height:14px;color:#000;letter-spacing:-0.262px;">07.02.2019</div>
<div class="t" style="left:990.20px;top:375px;font-size:11.5px;line-height:14px;color:#000;letter-spacing:-0.351px;">12.02.2019</div>
<div class="t" style="left:1110.80px;top:375px;font-size:11.5px;line-height:14px;color:#000;letter-spacing:-0.315px;">Listenbestellung</div>
<div class="r" style="left:10px;top:411px;width:1258px;height:1px;background:#d6d6d6;"></div>
<div class="r" style="left:25px;top:392px;width:1px;height:19px;background:#d9d9d9;"></div>
<div class="r" style="left:145px;top:392px;width:1px;height:19px;background:#c6d0de;"></div>
<div class="r" style="left:265px;top:392px;width:1px;height:19px;background:#c6d0de;"></div>
<div class="r" style="left:385px;top:392px;width:1px;height:19px;background:#c6d0de;"></div>
<div class="r" style="left:505px;top:392px;width:1px;height:19px;background:#c6d0de;"></div>
<div class="r" style="left:625px;top:392px;width:1px;height:19px;background:#c6d0de;"></div>
<div class="r" style="left:745px;top:392px;width:1px;height:19px;background:#c6d0de;"></div>
<div class="r" style="left:865px;top:392px;width:1px;height:19px;background:#c6d0de;"></div>
<div class="r" style="left:985px;top:392px;width:1px;height:19px;background:#c6d0de;"></div>
<div class="r" style="left:1105px;top:392px;width:1px;height:19px;background:#c6d0de;"></div>
<div class="r" style="left:1225px;top:392px;width:1px;height:19px;background:#c6d0de;"></div>
<div class="t" style="left:134.50px;top:395px;font-size:11.5px;line-height:14px;color:#000;letter-spacing:-0.390px;">3</div>
<div class="t" style="left:224.67px;top:395px;font-size:11.5px;line-height:14px;color:#000;letter-spacing:-0.390px;">750009</div>
<div class="t" style="left:326.45px;top:395px;font-size:11.5px;line-height:14px;color:#000;letter-spacing:-0.390px;">106000002</div>
<div class="t" style="left:390.20px;top:395px;font-size:11.5px;line-height:14px;color:#000;letter-spacing:-0.267px;">Kabel Joe GmbH</div>
<div class="r" style="left:558px;top:395px;width:12px;height:12px;border:1px solid #8c8c8c;background:#fff"></div>
<svg class="s" style="left:558px;top:395px" width="14" height="14" viewBox="0 0 14 14"><path d="M2.6 6.3 L5.3 9.3 L11.6 2.8" fill="none" stroke="#333" stroke-width="2"/></svg>
<div class="t" style="left:854.30px;top:395px;font-size:11.5px;line-height:14px;color:#000;letter-spacing:0.000px;">1</div>
<div class="t" style="left:869.90px;top:395px;font-size:11.5px;line-height:14px;color:#000;letter-spacing:-0.262px;">04.02.2019</div>
<div class="t" style="left:990.20px;top:395px;font-size:11.5px;line-height:14px;color:#000;letter-spacing:-0.351px;">12.02.2019</div>
<div class="t" style="left:1110.80px;top:395px;font-size:11.5px;line-height:14px;color:#000;letter-spacing:-0.287px;">manuelle Bestellung</div>
<svg class="s" style="left:15px;top:298px" width="6" height="8" viewBox="0 0 6 8"><path d="M1 0.5 V7.5 L5 4 Z" fill="#15275a"/></svg>
<svg class="s" style="left:1272px;top:198px" width="9" height="6" viewBox="0 0 9 6"><path d="M1 5 L4.5 1.5 L8 5" fill="none" stroke="#c4c4c4" stroke-width="1.3"/></svg>
<svg class="s" style="left:1272px;top:690px" width="9" height="7" viewBox="0 0 9 7"><path d="M1 1.5 L4.5 5 L8 1.5" fill="none" stroke="#c4c4c4" stroke-width="1.3"/></svg>
<div class="r" style="left:26px;top:702px;width:1242px;height:17px;background:#efefef;"></div>
<div class="r" style="left:10px;top:702px;width:16px;height:1px;background:#d4d4d4;"></div>
<div class="r" style="left:25px;top:702px;width:1px;height:17px;background:#d4d4d4;"></div>
<div class="r" style="left:43px;top:702px;width:834px;height:17px;background:#c0c0c0;"></div>
<svg class="s" style="left:31px;top:706px" width="8" height="9" viewBox="0 0 8 9"><path d="M6.5 1 L2.3 4.4 L6.5 7.8" fill="none" stroke="#555" stroke-width="2"/></svg>
<svg class="s" style="left:1256px;top:706px" width="8" height="9" viewBox="0 0 8 9"><path d="M1.5 1 L5.7 4.4 L1.5 7.8" fill="none" stroke="#555" stroke-width="2"/></svg>
<div class="r" style="left:1268px;top:702px;width:17px;height:17px;background:#efefef;"></div>
<div class="r" style="left:548px;top:399px;width:355px;height:93px;background:#fff;border:1px solid #b4b4b4"></div>
<div class="t" style="left:557.00px;top:403px;font-size:12px;line-height:14px;color:#222;letter-spacing:0.020px;">Schriftfarben</div>
<div class="r" style="left:561px;top:423px;width:3px;height:3px;background:#222;border-radius:50%"></div>
<div class="t" style="left:575.20px;top:418px;font-size:12px;line-height:14px;color:#222;letter-spacing:0.025px;">&#x27;rot&#x27;: Die Bestellung wurde noch nicht gedruckt.</div>
<div class="r" style="left:561px;top:437px;width:3px;height:3px;background:#222;border-radius:50%"></div>
<div class="t" style="left:575.20px;top:432px;font-size:12px;line-height:14px;color:#222;letter-spacing:-0.019px;">&#x27;grau&#x27;: Die Bestellung ist erledigt.</div>
<div class="r" style="left:561px;top:452px;width:3px;height:3px;background:#222;border-radius:50%"></div>
<div class="t" style="left:575.20px;top:447px;font-size:12px;line-height:14px;color:#222;letter-spacing:-0.062px;">&#x27;schwarz&#x27;: Die Bestellung wurde mindestens einmal gedruckt.</div>
<div class="t" style="left:557.00px;top:461px;font-size:12px;line-height:14px;color:#222;letter-spacing:0.153px;">Hintergrundfarben</div>
<div class="r" style="left:561px;top:481px;width:3px;height:3px;background:#222;border-radius:50%"></div>
<div class="t" style="left:575.20px;top:476px;font-size:12px;line-height:14px;color:#222;letter-spacing:-0.037px;">&#x27;rot&#x27;: Der Lieferant hat keine QM-Zulassung.</div>
<svg class="s" style="left:860px;top:348px" width="14" height="21" viewBox="0 0 14 21"><path d="M1.5 1 V17.5 L5.3 14 L8.2 20 L10.6 18.8 L7.8 13.2 L12.8 13.2 Z" fill="#fff" stroke="#000" stroke-width="1.1" stroke-linejoin="miter"/></svg>
<div class="t" style="left:30.80px;top:725px;font-size:12px;line-height:14px;color:#1a1a1a;letter-spacing:-0.244px;">(Standard)</div>
<svg class="s" style="left:114px;top:727px" width="16" height="11" viewBox="0 0 16 11"><path d="M0.5 0.5 H15 V10 H0.5 Z" fill="#363b3b"/><path d="M0.5 0.8 L7.75 6.2 L15 0.8 M0.5 10 L5.5 5 M15 10 L10 5" fill="none" stroke="#e6e6e6" stroke-width="1"/></svg>
<div class="t" style="left:136.50px;top:725px;font-size:12px;line-height:14px;color:#1a1a1a;letter-spacing:-0.108px;">Keine neuen Nachrichten</div>
<svg class="s" style="left:280px;top:723px" width="17" height="17" viewBox="0 0 17 17"><circle cx="10.5" cy="6.5" r="4.6" fill="none" stroke="#363b3b" stroke-width="1.8"/><path d="M7.3 9.8 L2 15" stroke="#363b3b" stroke-width="2.6"/></svg>
<div class="t" style="left:310.00px;top:725px;font-size:12px;line-height:14px;color:#1a1a1a;letter-spacing:-0.178px;">Letzte Änderung: 04.10.2021 08:41 durch Klaus Spitzenverkäufer</div>
<div class="t" style="left:677.30px;top:725px;font-size:12px;line-height:14px;color:#1a1a1a;letter-spacing:-0.285px;white-space:pre">| Geschäftsstelle:  1 (OS)</div>
<div class="t" style="left:1134.70px;top:725px;font-size:12px;line-height:14px;color:#1a1a1a;letter-spacing:-1.024px;">100</div>
<div class="t" style="left:1157.00px;top:725px;font-size:12px;line-height:14px;color:#1a1a1a;letter-spacing:0.000px;">%</div>
<div class="r" style="left:1174px;top:730px;width:101px;height:2px;background:#fff;border:1px solid #c4c4c4;border-radius:3px"></div>
<div class="r" style="left:1217px;top:724px;width:13px;height:13px;background:#fff;border:1px solid #c4c4c4;border-radius:50%"></div>
</body></html>
